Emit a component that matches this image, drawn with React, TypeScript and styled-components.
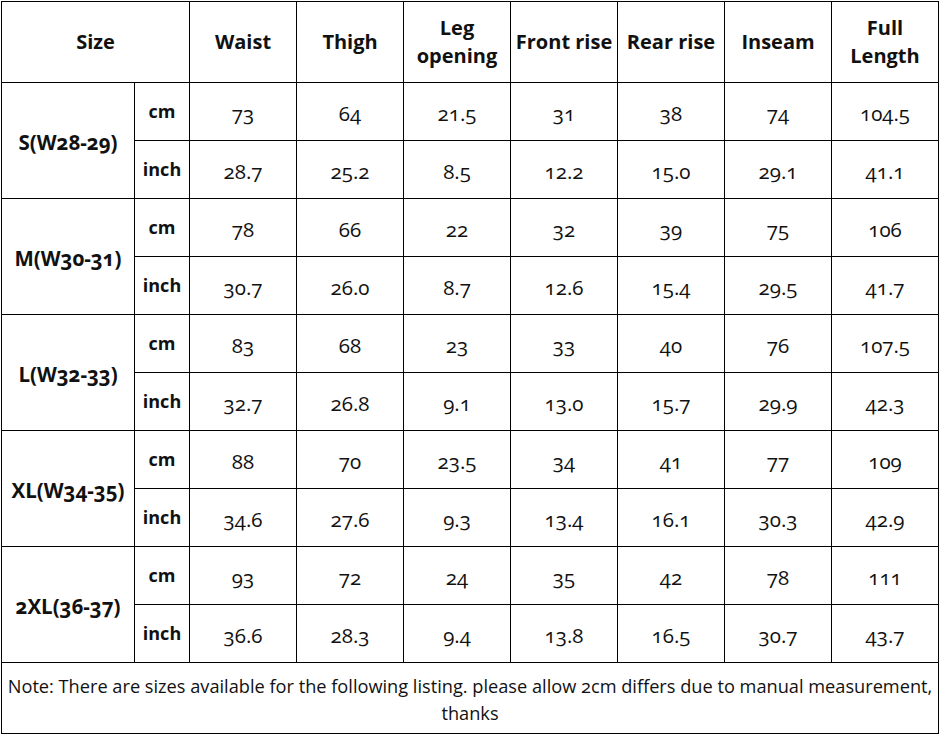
import styled, { createGlobalStyle } from "styled-components";

const GlobalStyle = createGlobalStyle`
  html, body {
    margin: 0;
    padding: 0;
    background: #ffffff;
  }
  body {
    font-family: "Open Sans", "Noto Sans", sans-serif;
    color: #111;
  }
`;

type SizeRow = {
    label: string;
    cm: string[];
    inch: string[];
};

const columns = ["Waist", "Thigh", "Leg\nopening", "Front rise", "Rear rise", "Inseam", "Full\nLength"];

const sizes: SizeRow[] = [
    { label: "S(W28-29)", cm: ["73", "64", "21.5", "31", "38", "74", "104.5"], inch: ["28.7", "25.2", "8.5", "12.2", "15.0", "29.1", "41.1"] },
    { label: "M(W30-31)", cm: ["78", "66", "22", "32", "39", "75", "106"], inch: ["30.7", "26.0", "8.7", "12.6", "15.4", "29.5", "41.7"] },
    { label: "L(W32-33)", cm: ["83", "68", "23", "33", "40", "76", "107.5"], inch: ["32.7", "26.8", "9.1", "13.0", "15.7", "29.9", "42.3"] },
    { label: "XL(W34-35)", cm: ["88", "70", "23.5", "34", "41", "77", "109"], inch: ["34.6", "27.6", "9.3", "13.4", "16.1", "30.3", "42.9"] },
    { label: "2XL(36-37)", cm: ["93", "72", "24", "35", "42", "78", "111"], inch: ["36.6", "28.3", "9.4", "13.8", "16.5", "30.7", "43.7"] },
];

export default function App() {
    return (
        <>
            <GlobalStyle />
            <Page>
                <Chart>
                    <colgroup>
                        <col style={{ width: 133 }} />
                        <col style={{ width: 55 }} />
                        {columns.map((c) => (
                            <col key={c} style={{ width: 107 }} />
                        ))}
                    </colgroup>
                    <thead>
                        <HeadRow>
                            <HeadCell colSpan={2}>Size</HeadCell>
                            {columns.map((c) => (
                                <HeadCell key={c}>{c}</HeadCell>
                            ))}
                        </HeadRow>
                    </thead>
                    <tbody>
                        {sizes.map((s) => (
                            <>
                                <DataRow key={s.label + "cm"}>
                                    <SizeCell rowSpan={2}>{s.label}</SizeCell>
                                    <UnitCell>cm</UnitCell>
                                    {s.cm.map((v, i) => (
                                        <ValueCell key={i}>{v}</ValueCell>
                                    ))}
                                </DataRow>
                                <DataRow key={s.label + "inch"}>
                                    <UnitCell>inch</UnitCell>
                                    {s.inch.map((v, i) => (
                                        <ValueCell key={i}>{v}</ValueCell>
                                    ))}
                                </DataRow>
                            </>
                        ))}
                        <NoteRow>
                            <NoteCell colSpan={9}>
                                Note: There are sizes available for the following listing. please allow 2cm differs due to manual measurement, thanks
                            </NoteCell>
                        </NoteRow>
                    </tbody>
                </Chart>
            </Page>
        </>
    );
}

const Page = styled.div`
    padding: 1px 0 0 1px;
    width: 940px;
    height: 735px;
    box-sizing: border-box;
`;

const Chart = styled.table`
    border-collapse: collapse;
    table-layout: fixed;
    width: 938px;
    font-variant-numeric: oldstyle-nums;
    font-feature-settings: "onum" 1;

    td, th {
        border: 1px solid #000;
        padding: 0;
        text-align: center;
    }
`;

const HeadRow = styled.tr`
    height: 81px;
`;

const HeadCell = styled.th`
    font-size: 20px;
    font-weight: 700;
    line-height: 28px;
    white-space: pre-line;
    color: #111;
`;

const DataRow = styled.tr`
    height: 58px;
`;

const SizeCell = styled.td`
    font-size: 20.5px;
    font-weight: 700;
    padding-top: 2px !important;
`;

const UnitCell = styled.td`
    font-size: 18px;
    font-weight: 700;
    vertical-align: middle;
    padding-bottom: 2px !important;
`;

const ValueCell = styled.td`
    font-size: 20.5px;
    font-weight: 400;
    padding-top: 2px !important;
`;

const NoteRow = styled.tr`
    height: 71px;
`;

const NoteCell = styled.td`
    font-size: 18.2px;
    line-height: 27px;
    vertical-align: top;
    padding: 10px 0 0 !important;
`;
